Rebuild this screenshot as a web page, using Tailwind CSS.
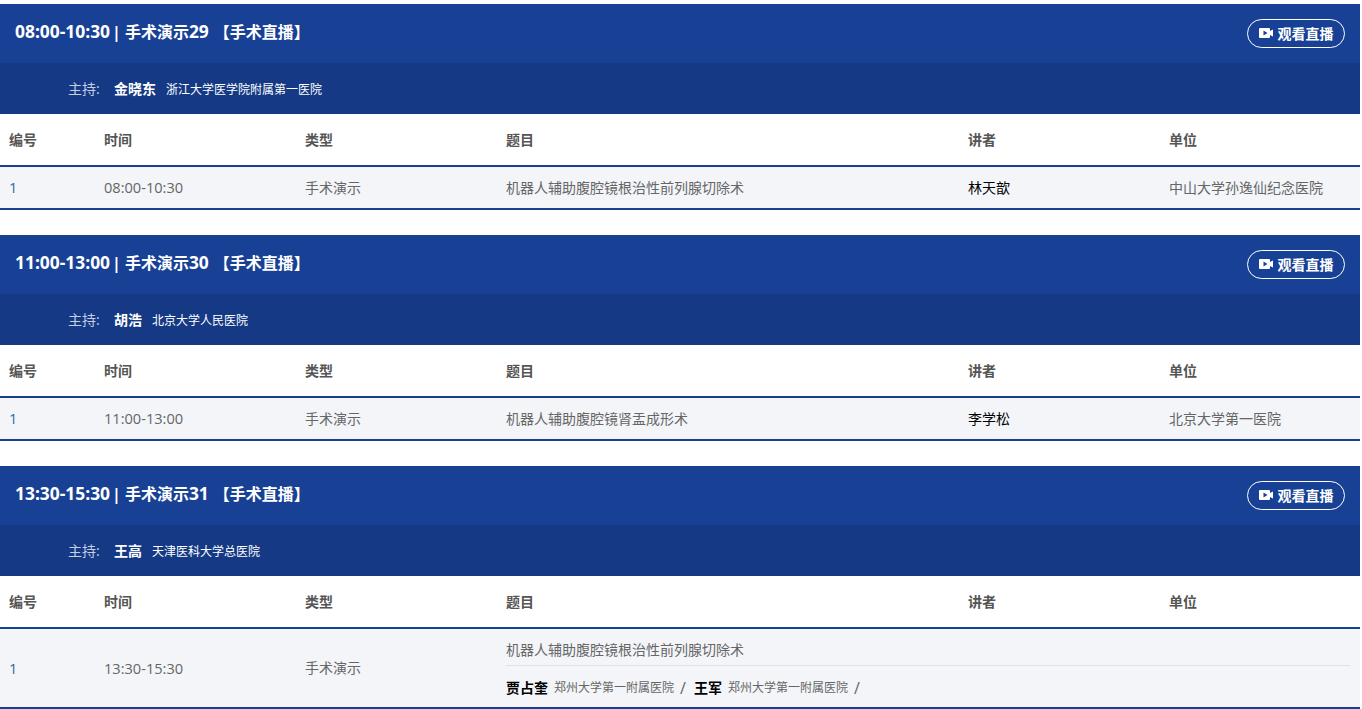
<!DOCTYPE html>
<html lang="zh-CN">
<head>
    <meta charset="UTF-8">
    <title>手术直播</title>
    <script src="https://cdn.jsdelivr.net/npm/@tailwindcss/browser@4"></script>
</head>
<body class="bg-white font-['Open_Sans','Noto_Sans_CJK_SC',sans-serif] overflow-hidden">
    <div class="w-[1360px] pt-1">

        <!-- session 29 -->
        <section class="mb-[25px]">
            <div class="h-[59px] bg-[#184195] flex items-center justify-between px-[15px]">
                <h2 class="flex items-baseline text-base font-bold text-white pb-[5px]"><span class="text-[17.4px]">08:00-10:30</span><span class="ml-[2px] mr-[4px]">|</span>手术演示<span class="text-[17.4px]">29</span><span class="ml-[5px]">【手术直播】</span></h2>
                <a class="h-[29px] w-[98px] -mt-[1px] border border-white rounded-full flex items-center justify-center gap-[5px] text-sm font-bold text-white">
                    <svg width="14" height="10" viewBox="0 0 14 10"><path fill="#fff" fill-rule="evenodd" d="M0 1a1 1 0 0 1 1-1h9a1 1 0 0 1 1 1v2l3-1.500v7l-3-1.500v2a1 1 0 0 1-1 1H1a1 1 0 0 1-1-1zM4.500 2.500v5L8.500 5z"/></svg>
                    <span class="pt-[1px]">观看直播</span>
                </a>
            </div>
            <div class="h-[51px] bg-[#153985] flex items-center pl-[68px]">
                <span class="w-[46px] text-sm text-[#c5cfe3]">主持:</span>
                <span class="text-sm font-bold text-white mr-[10px]">金晓东</span>
                <span class="text-xs text-white pt-[2px]">浙江大学医学院附属第一医院</span>
            </div>
            <div class="grid grid-cols-[104px_201px_201px_462px_201px_1fr] h-[51px] items-center text-sm font-bold text-[#555]">
                <div class="pl-[9px]">编号</div><div>时间</div><div>类型</div><div>题目</div><div>讲者</div><div>单位</div>
            </div>
            <div class="grid grid-cols-[104px_201px_201px_462px_201px_1fr] h-[45px] items-center text-sm text-[#666] bg-[#f3f5f9] border-y-2 border-[#183f90]">
                <div class="pl-[9px] text-[14.6px] text-[#2c6a9f]">1</div><div class="text-[14.6px]">08:00-10:30</div><div>手术演示</div><div>机器人辅助腹腔镜根治性前列腺切除术</div><div class="text-black">林天歆</div><div>中山大学孙逸仙纪念医院</div>
            </div>
        </section>

        <!-- session 30 -->
        <section class="mb-[25px]">
            <div class="h-[59px] bg-[#184195] flex items-center justify-between px-[15px]">
                <h2 class="flex items-baseline text-base font-bold text-white pb-[5px]"><span class="text-[17.4px]">11:00-13:00</span><span class="ml-[2px] mr-[4px]">|</span>手术演示<span class="text-[17.4px]">30</span><span class="ml-[5px]">【手术直播】</span></h2>
                <a class="h-[29px] w-[98px] -mt-[1px] border border-white rounded-full flex items-center justify-center gap-[5px] text-sm font-bold text-white">
                    <svg width="14" height="10" viewBox="0 0 14 10"><path fill="#fff" fill-rule="evenodd" d="M0 1a1 1 0 0 1 1-1h9a1 1 0 0 1 1 1v2l3-1.500v7l-3-1.500v2a1 1 0 0 1-1 1H1a1 1 0 0 1-1-1zM4.500 2.500v5L8.500 5z"/></svg>
                    <span class="pt-[1px]">观看直播</span>
                </a>
            </div>
            <div class="h-[51px] bg-[#153985] flex items-center pl-[68px]">
                <span class="w-[46px] text-sm text-[#c5cfe3]">主持:</span>
                <span class="text-sm font-bold text-white mr-[10px]">胡浩</span>
                <span class="text-xs text-white pt-[2px]">北京大学人民医院</span>
            </div>
            <div class="grid grid-cols-[104px_201px_201px_462px_201px_1fr] h-[51px] items-center text-sm font-bold text-[#555]">
                <div class="pl-[9px]">编号</div><div>时间</div><div>类型</div><div>题目</div><div>讲者</div><div>单位</div>
            </div>
            <div class="grid grid-cols-[104px_201px_201px_462px_201px_1fr] h-[45px] items-center text-sm text-[#666] bg-[#f3f5f9] border-y-2 border-[#183f90]">
                <div class="pl-[9px] text-[14.6px] text-[#2c6a9f]">1</div><div class="text-[14.6px]">11:00-13:00</div><div>手术演示</div><div>机器人辅助腹腔镜肾盂成形术</div><div class="text-black">李学松</div><div>北京大学第一医院</div>
            </div>
        </section>

        <!-- session 31 -->
        <section>
            <div class="h-[59px] bg-[#184195] flex items-center justify-between px-[15px]">
                <h2 class="flex items-baseline text-base font-bold text-white pb-[5px]"><span class="text-[17.4px]">13:30-15:30</span><span class="ml-[2px] mr-[4px]">|</span>手术演示<span class="text-[17.4px]">31</span><span class="ml-[5px]">【手术直播】</span></h2>
                <a class="h-[29px] w-[98px] -mt-[1px] border border-white rounded-full flex items-center justify-center gap-[5px] text-sm font-bold text-white">
                    <svg width="14" height="10" viewBox="0 0 14 10"><path fill="#fff" fill-rule="evenodd" d="M0 1a1 1 0 0 1 1-1h9a1 1 0 0 1 1 1v2l3-1.500v7l-3-1.500v2a1 1 0 0 1-1 1H1a1 1 0 0 1-1-1zM4.500 2.500v5L8.500 5z"/></svg>
                    <span class="pt-[1px]">观看直播</span>
                </a>
            </div>
            <div class="h-[51px] bg-[#153985] flex items-center pl-[68px]">
                <span class="w-[46px] text-sm text-[#c5cfe3]">主持:</span>
                <span class="text-sm font-bold text-white mr-[10px]">王高</span>
                <span class="text-xs text-white pt-[2px]">天津医科大学总医院</span>
            </div>
            <div class="grid grid-cols-[104px_201px_201px_462px_201px_1fr] h-[51px] items-center text-sm font-bold text-[#555]">
                <div class="pl-[9px]">编号</div><div>时间</div><div>类型</div><div>题目</div><div>讲者</div><div>单位</div>
            </div>
            <div class="grid grid-cols-[104px_201px_201px_1fr] h-[82px] items-center text-sm text-[#666] bg-[#f3f5f9] border-y-2 border-[#183f90]">
                <div class="pl-[9px] text-[14.6px] text-[#2c6a9f]">1</div><div class="text-[14.6px]">13:30-15:30</div><div>手术演示</div>
                <div class="pr-[10px]">
                    <div class="h-[37px] pt-[5px] flex items-center border-b border-[#dde1ec]">机器人辅助腹腔镜根治性前列腺切除术</div>
                    <div class="h-[41px] pt-[2px] flex items-center">
                        <span class="font-bold text-black mr-[6px]">贾占奎</span>
                        <span class="text-xs mr-[6px]">郑州大学第一附属医院</span>
                        <span class="text-base mr-[8px]">/</span>
                        <span class="font-bold text-black mr-[6px]">王军</span>
                        <span class="text-xs mr-[6px]">郑州大学第一附属医院</span>
                        <span class="text-base">/</span>
                    </div>
                </div>
            </div>
        </section>
    </div>
</body>
</html>
